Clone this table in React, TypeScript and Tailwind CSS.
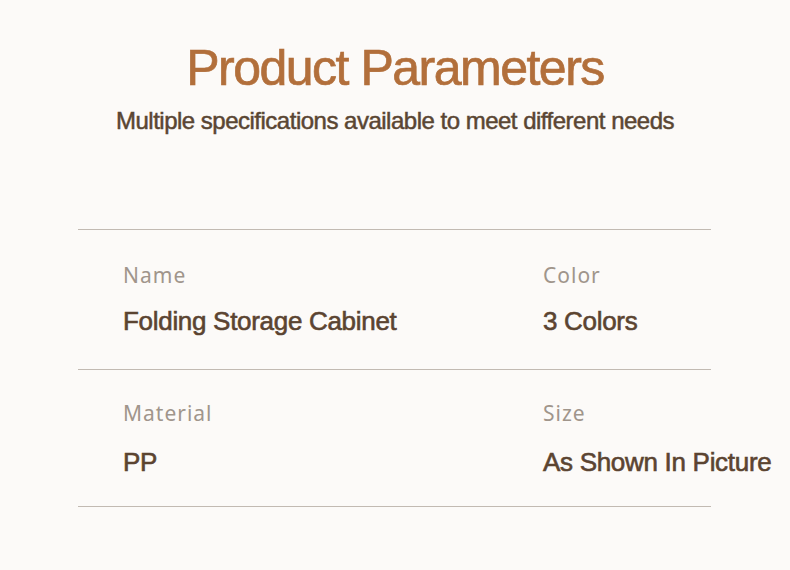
const rows = [
  [
    { label: "Name", value: "Folding Storage Cabinet" },
    { label: "Color", value: "3 Colors" },
  ],
  [
    { label: "Material", value: "PP" },
    { label: "Size", value: "As Shown In Picture" },
  ],
]

export default function App() {
  return (
    <div className="h-[570px] w-[790px] overflow-hidden bg-[#fcfaf8]">
      <div className="flex flex-col items-center pt-[39px]">
        <h1 className="font-['Liberation_Sans',Arial,sans-serif] text-[50px] leading-[58px] tracking-[-1.5px] text-[#b26f3b] [-webkit-text-stroke:0.7px_#b26f3b]">
          Product Parameters
        </h1>
        <p className="mt-[10px] font-['Liberation_Sans',Arial,sans-serif] text-[24px] leading-[28px] tracking-[-0.5px] text-[#5a4633] [-webkit-text-stroke:0.5px_#5a4633]">
          Multiple specifications available to meet different needs
        </p>
      </div>

      <div className="ml-[78px] mt-[94px] w-[633px] border-t border-[#c2bab2]">
        {rows.map((row, i) => (
          <div
            key={i}
            className={`flex border-b border-[#c2bab2] pl-[45px] ${i === 0 ? "pt-[31px] pb-[31px]" : "pt-[29px] pb-[27px]"}`}
          >
            {row.map((cell) => (
              <div key={cell.label} className="shrink-0 whitespace-nowrap first:w-[420px]">
                <div className="font-['Noto_Sans',sans-serif] text-[21px] leading-[28px] tracking-[1px] text-[#a0958b]">
                  {cell.label}
                </div>
                <div
                  className={`${i === 0 ? "mt-[15px]" : "mt-[18px]"} font-['Liberation_Sans',Arial,sans-serif] text-[26px] leading-[34px] tracking-[-0.3px] text-[#5b4431] [-webkit-text-stroke:0.6px_#5b4431]`}
                >
                  {cell.value}
                </div>
              </div>
            ))}
          </div>
        ))}
      </div>
    </div>
  )
}
